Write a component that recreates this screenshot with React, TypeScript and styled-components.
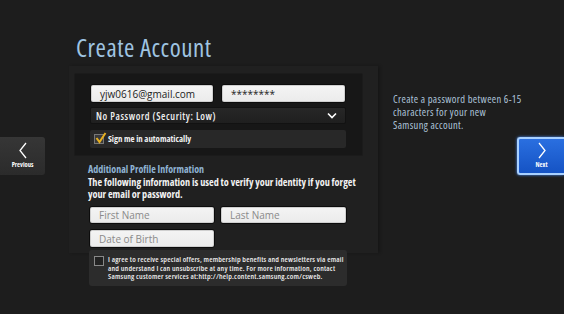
import React from "react";
import styled, { createGlobalStyle } from "styled-components";

const FONT = `"Open Sans", "DejaVu Sans Condensed", sans-serif`;

const Global = createGlobalStyle`
  html, body { margin: 0; padding: 0; background: #1d1d1d; overflow: hidden; }
  body { font-family: ${FONT}; font-stretch: condensed; }
  * { box-sizing: border-box; }
`;

const Page = styled.div`
  width: 564px;
  height: 314px;
  display: flex;
  align-items: flex-start;
  background: #1d1d1d;
  font-family: ${FONT};
  font-stretch: condensed;
`;

const NavButton = styled.div<{ $primary?: boolean }>`
  width: ${(p) => (p.$primary ? "47px" : "45px")};
  height: 38px;
  margin-top: 137px;
  flex-shrink: 0;
  display: flex;
  flex-direction: column;
  align-items: center;
  padding-top: ${(p) => (p.$primary ? "3px" : "5px")};
  gap: 2px;
  color: #fff;
  font-size: 6.5px;
  line-height: 8px;
  font-weight: bold;
  border-radius: ${(p) => (p.$primary ? "3px 0 0 3px" : "0 3px 3px 0")};
  background: ${(p) =>
    p.$primary
      ? "linear-gradient(#2a6fe0, #1553c4)"
      : "linear-gradient(#363636, #2b2b2b)"};
  border: ${(p) => (p.$primary ? "2px solid #a8d0ff" : "none")};
  border-right: none;
  box-shadow: ${(p) => (p.$primary ? "0 0 3px #4a90ff" : "none")};
  margin-left: ${(p) => (p.$primary ? "auto" : "0")};
`;

const Main = styled.div`
  width: 309px;
  margin-left: 24px;
  flex-shrink: 0;
  display: flex;
  flex-direction: column;
`;

const Title = styled.h1`
  margin: 33px 0 0 7px;
  height: 33px;
  font-weight: normal;
  font-size: 25px;
  letter-spacing: 0.5px;
  line-height: 28px;
  color: #9fc4e2;
`;

const Content = styled.div`
  background: #202020;
  box-shadow: 2px 0 3px rgba(0, 0, 0, 0.25);
  height: 187px;
  padding-left: 5px;
  display: flex;
  flex-direction: column;
`;

const Panel = styled.div`
  width: 289px;
  margin-top: 7px;
  padding: 10px 16px 7px 15px;
  background: #171717;
  border: 1px solid #1b1b1b;
  border-radius: 2px;
  display: flex;
  flex-direction: column;
`;

const Row = styled.div<{ $gap?: number }>`
  display: flex;
  gap: ${(p) => p.$gap ?? 7}px;
`;

const Input = styled.div<{ $w: number; $placeholder?: boolean; $h?: number }>`
  width: ${(p) => p.$w}px;
  height: ${(p) => p.$h ?? 19}px;
  background: linear-gradient(#f4f4f4, #ebebeb);
  border: 1px solid #0c0c0c;
  box-shadow: inset 0 0 0 1px #cfcfcf;
  border-radius: 3px;
  padding-left: 9px;
  display: flex;
  align-items: center;
  font-size: 10px;
  font-stretch: normal;
  color: ${(p) => (p.$placeholder ? "#8a8a8a" : "#222")};
`;

const Select = styled.div`
  margin-top: 4px;
  height: 17px;
  background: linear-gradient(#272727, #1f1f1f);
  border: 1px solid #121212;
  border-radius: 2px;
  display: flex;
  align-items: center;
  justify-content: space-between;
  padding: 0 8px 0 5px;
  color: #f0f0f0;
  font-size: 10px;
  letter-spacing: 0.6px;
  font-weight: 600;
`;

const CheckRow = styled.div`
  margin-top: 6px;
  height: 18px;
  background: #282828;
  border-radius: 2px;
  display: flex;
  align-items: center;
  padding-left: 4px;
  gap: 4px;
  color: #f0f0f0;
  font-size: 8.8px;
  font-weight: bold;
`;

const Box = styled.span`
  width: 10px;
  height: 10px;
  border: 1px solid #777;
  background: #3a3a3a;
  position: relative;
  flex-shrink: 0;
`;

const Check = styled.svg`
  position: absolute;
  left: 0px;
  top: -3px;
`;

const Section = styled.div`
  padding-left: 14px;
  width: 289px;
  display: flex;
  flex-direction: column;
`;

const SubTitle = styled.div`
  margin-top: 7px;
  font-size: 10px;
  font-weight: bold;
  line-height: 13px;
  color: #8fb3d3;
`;

const Body = styled.div`
  font-size: 10.2px;
  font-weight: bold;
  line-height: 12px;
  color: #f2f2f2;
  width: 280px;
`;

const Inputs = styled.div`
  margin-top: 6px;
  margin-left: 1px;
  display: flex;
  flex-direction: column;
  gap: 5px;
`;

const Agree = styled.div`
  margin-top: 2px;
  margin-left: 1px;
  width: 258px;
  height: 36px;
  background: #2c2c2c;
  border-radius: 3px;
  display: flex;
  gap: 4px;
  padding: 5px 6px 0 5px;
`;

const AgreeBox = styled.span`
  width: 10px;
  height: 10px;
  margin-top: 1px;
  border: 1px solid #888;
  background: #222;
  flex-shrink: 0;
`;

const AgreeText = styled.div`
  font-size: 7.6px;
  letter-spacing: 0.2px;
  line-height: 8.6px;
  font-weight: 600;
  color: #eee;
  white-space: nowrap;
`;

const Help = styled.div`
  margin-left: 15px;
  margin-top: 93px;
  width: 124px;
  flex-shrink: 0;
  white-space: nowrap;
  font-size: 10.5px;
  letter-spacing: 0.34px;
  line-height: 12.8px;
  color: #aec4da;
`;

const Chevron = ({ dir }: { dir: "left" | "right" }) => (
  <svg width="12" height="17" viewBox="0 0 12 17">
    <path
      d={dir === "left" ? "M9 1 L3 8.5 L9 16" : "M3 1 L9 8.5 L3 16"}
      stroke="#fff"
      strokeWidth="1.3"
      fill="none"
    />
  </svg>
);

export default function App() {
  return (
    <>
      <Global />
      <Page>
        <NavButton>
          <Chevron dir="left" />
          <span>Previous</span>
        </NavButton>
        <Main>
          <Title>Create Account</Title>
          <Content>
            <Panel>
              <Row>
                <Input $w={125}>yjw0616@gmail.com</Input>
                <Input $w={126}>********</Input>
              </Row>
              <Select>
                <span>No Password (Security: Low)</span>
                <svg width="10" height="7" viewBox="0 0 10 7">
                  <path d="M1 1.5 L5 5.5 L9 1.5" stroke="#fff" strokeWidth="1.6" fill="none" />
                </svg>
              </Select>
              <CheckRow>
                <Box>
                  <Check width="12" height="12" viewBox="0 0 12 12">
                    <path d="M1.5 6 L4.5 10 L10.5 1" stroke="#e8b020" strokeWidth="2" fill="none" />
                  </Check>
                </Box>
                <span>Sign me in automatically</span>
              </CheckRow>
            </Panel>
            <Section>
              <SubTitle>Additional Profile Information</SubTitle>
              <Body>
                The following information is used to verify your identity if you forget
                your email or password.
              </Body>
              <Inputs>
                <Row $gap={5}>
                  <Input $w={126} $h={18} $placeholder>First Name</Input>
                  <Input $w={127} $h={18} $placeholder>Last Name</Input>
                </Row>
                <Input $w={126} $placeholder>Date of Birth</Input>
              </Inputs>
              <Agree>
                <AgreeBox />
                <AgreeText>
                  I agree to receive special offers, membership benefits and newsletters via email
                  <br />
                  and understand I can unsubscribe at any time. For more information, contact
                  <br />
                  Samsung customer services at:http://help.content.samsung.com/csweb.
                </AgreeText>
              </Agree>
            </Section>
          </Content>
        </Main>
        <Help>
          Create a password between 6-15
          <br />
          characters for your new
          <br />
          Samsung account.
        </Help>
        <NavButton $primary>
          <Chevron dir="right" />
          <span>Next</span>
        </NavButton>
      </Page>
    </>
  );
}
